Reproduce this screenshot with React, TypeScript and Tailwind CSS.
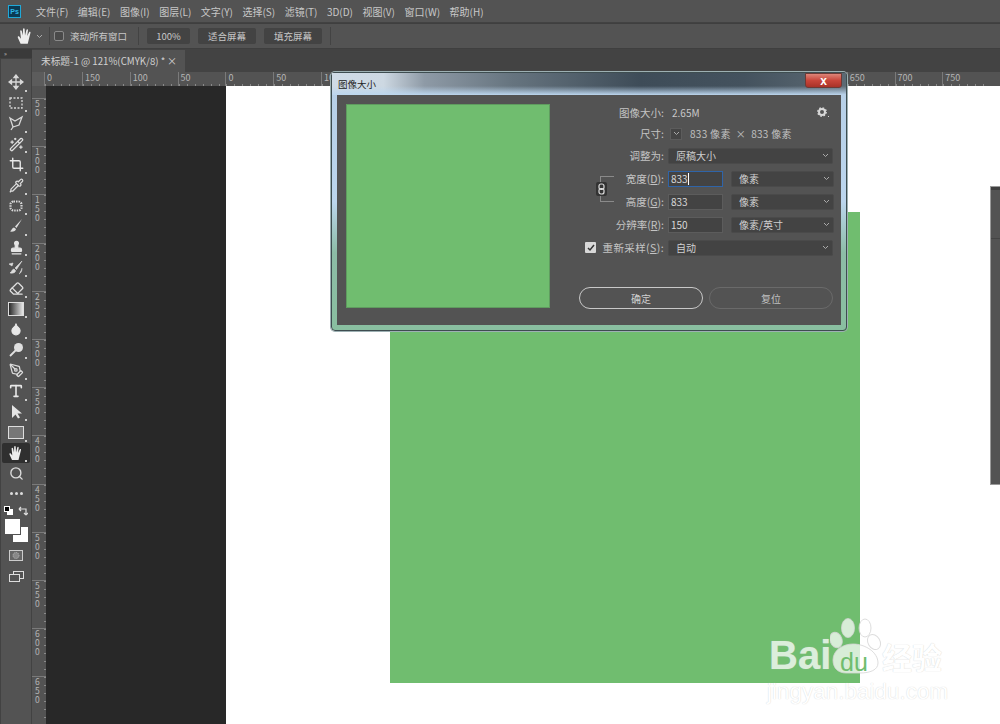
import React from 'react';
import { Crop, Droplet, Eraser, PenTool, Pipette, Search, Stamp, Type, WandSparkles } from 'lucide-react';

const menus = ['文件(F)', '编辑(E)', '图像(I)', '图层(L)', '文字(Y)', '选择(S)', '滤镜(T)', '3D(D)', '视图(V)', '窗口(W)', '帮助(H)'];
// labels between 150 and 600 sit behind the dialog
const topRuler = ['150', '100', '50', '0', '50', '100', '', '', '', '', '', '', '', '', '', '', '650', '700', '750'];
const sideRuler = ['50', '100', '150', '200', '250', '300', '350', '400', '450', '500', '550', '600', '650'];

function Svg({ children }: { children: React.ReactNode }) {
  return (
    <svg width="16" height="16" viewBox="0 0 16 16" fill="none" stroke="#d8d8d8" strokeWidth="1.3">
      {children}
    </svg>
  );
}

function HandIcon() {
  return (
    <svg width="16" height="16" viewBox="0 0 16 16" fill="#eee">
      <path d="M4 15 1.5 9.5c-.4-1 .8-1.6 1.4-.8L4.300 10.500 3.600 3.500c0-1 1.300-1 1.500 0L6 7.500 6.200 1.800c0-1 1.500-1 1.500 0L8 7.500 9.300 2.500c.2-1 1.500-.8 1.400.2L10 8l1.700-3.500c.4-.9 1.600-.4 1.300.5L11.500 11 10.500 15z" />
    </svg>
  );
}

const tools: React.ReactNode[] = [
  <Svg><path d="M8 1v14M1 8h14M8 1 6 3.500h4zM8 15l-2-2.500h4zM1 8l2.500-2v4zM15 8l-2.500-2v4z" fill="#d8d8d8" /></Svg>,
  <Svg><rect x="2" y="3" width="12" height="10" strokeDasharray="2 1.500" /></Svg>,
  <Svg><path d="M2 3l5 3 7-4-3 8-6 2zM5 12l-2 3" /></Svg>,
  <WandSparkles size={15} color="#e0e0e0" />,
  <Crop size={15} color="#e8e8e8" strokeWidth={2.2} />,
  <Pipette size={15} color="#dcdcdc" />,
  <Svg><rect x="2.500" y="3.500" width="11" height="9" rx="3" strokeWidth="2.200" strokeDasharray="1.500 1" /></Svg>,
  <svg width="16" height="16" viewBox="0 0 16 16" fill="#ddd"><path d="M14 1 7 8.500l1.500 1.500zM6 9.500c-2 .3-2 2.500-4 4 3 .5 6-.5 6-2.500z" /></svg>,
  <Stamp size={15} color="#e4e4e4" fill="#e4e4e4" />,
  <svg width="16" height="16" viewBox="0 0 16 16" fill="#ddd"><path d="M14 1 7 8l1.500 1.500zM6 9c-2 .3-2 2.500-4 4 3 .5 6-.5 5.500-2.500zM1 4l3 2 1-3zM14 8c0 3-1 5-3 6" stroke="#ddd" strokeWidth=".6" /></svg>,
  <Eraser size={15} color="#e0e0e0" />,
  <svg width="16" height="14" viewBox="0 0 16 14"><defs><linearGradient id="gr"><stop offset="0" stopColor="#222" /><stop offset="1" stopColor="#eee" /></linearGradient></defs><rect x=".5" y=".5" width="15" height="13" fill="url(#gr)" stroke="#ddd" /></svg>,
  <Droplet size={14} color="#e8e8e8" fill="#e8e8e8" />,
  <svg width="16" height="16" viewBox="0 0 16 16" fill="#e0e0e0"><circle cx="10.500" cy="5.500" r="4.500" /><path d="M8 8 2 14" stroke="#e0e0e0" strokeWidth="1.800" /></svg>,
  <PenTool size={15} color="#dcdcdc" />,
  <Type size={16} color="#e8e8e8" strokeWidth={2.4} />,
  <svg width="16" height="16" viewBox="0 0 16 16" fill="#e4e4e4"><path d="M4 1v13l3.500-3.500 2.500 4 2-1-2.500-4H14z" /></svg>,
  <svg width="16" height="13" viewBox="0 0 16 13"><rect x=".5" y=".5" width="15" height="12" fill="#777" stroke="#ddd" /></svg>,
  <HandIcon />,
  <Search size={15} color="#dcdcdc" strokeWidth={2.2} />,
];

function ToolBar() {
  return (
    <div className="w-[32px] shrink-0 flex flex-col bg-[#424242]">
      <div className="h-[9px] bg-[#3a3a3a] pl-[4px] text-[6px] leading-[9px] text-[#bbb]">»</div>
      <div className="flex-1 w-[30px] ml-px mt-px bg-[#535353] flex flex-col items-center pt-[13px]">
        {tools.map((icon, i) => (
          <div key={i} className={`relative w-[28px] h-[20.6px] shrink-0 flex items-center justify-center rounded-[2px] ${i === 18 ? 'bg-[#2f2f2f]' : ''}`}>
            {icon}
            {i !== 19 && <span className="absolute right-[3px] bottom-[1px] w-[2px] h-[2px] bg-[#ccc]" />}
          </div>
        ))}
        <div className="flex gap-[2px] h-[20px] items-center justify-center shrink-0">
          {[0, 1, 2].map((i) => (
            <span key={i} className="w-[3px] h-[3px] rounded-full bg-[#ddd]" />
          ))}
        </div>
        <div className="flex justify-between w-[24px] h-[14px] items-center shrink-0">
          <span className="relative w-[9px] h-[9px]">
            <span className="absolute right-0 bottom-0 w-[6px] h-[6px] bg-white" />
            <span className="absolute left-0 top-0 w-[6px] h-[6px] bg-black border border-white" />
          </span>
          <svg width="10" height="10" viewBox="0 0 10 10" fill="none" stroke="#ddd" strokeWidth="1.200">
            <path d="M1 3h7v6M1 3l2-2M1 3l2 2M8 9l-2-2M8 9l2-2" />
          </svg>
        </div>
        <div className="relative w-[24px] h-[24px] shrink-0">
          <span className="absolute right-0 bottom-0 w-[15px] h-[15px] bg-white" />
          <span className="absolute left-0 top-0 w-[15px] h-[15px] bg-white border border-[#535353] box-content" />
        </div>
        <div className="h-[26px] flex items-center shrink-0 mt-px">
          <svg width="14" height="11" viewBox="0 0 14 11">
            <rect x=".5" y=".5" width="13" height="10" fill="#666" stroke="#ccc" />
            <circle cx="7" cy="5.500" r="3" fill="#888" stroke="#bbb" strokeDasharray="1 1" />
          </svg>
        </div>
        <div className="h-[16px] flex items-center shrink-0">
          <svg width="15" height="11" viewBox="0 0 15 11" fill="#535353" stroke="#ddd">
            <rect x="4.500" y=".5" width="10" height="7" />
            <rect x=".5" y="3.500" width="10" height="7" />
          </svg>
        </div>
      </div>
    </div>
  );
}

function RulerCell({ label, width }: { label: string; width: string }) {
  return (
    <div className={`${width} shrink-0 relative border-l border-[#7a7a7a] pl-[2px]`}>
      {label}
      <span className="absolute left-0 right-0 bottom-0 h-[2px] bg-[repeating-linear-gradient(90deg,#8a8a8a_0,#8a8a8a_1px,transparent_1px,transparent_8px)]" />
    </div>
  );
}

function TopRuler() {
  return (
    <div className="h-[14px] bg-[#535353] flex shrink-0 overflow-hidden text-[9px] leading-[12px] text-[#b5b5b5]">
      <div className="w-[12px] shrink-0 bg-[#5c5c5c]" />
      <RulerCell label="0" width="w-[38px]" />
      {topRuler.map((label, i) => (
        <RulerCell key={i} label={label} width="w-[47.8px]" />
      ))}
    </div>
  );
}

function SideRuler() {
  return (
    <div className="w-[14px] shrink-0 bg-[#535353] overflow-hidden">
      <div className="h-[12px]" />
      {sideRuler.map((label, i) => (
        <div key={i} className="relative h-[48.2px] border-t border-[#7a7a7a] pl-[3px] text-[8.500px] leading-[9px] text-[#b5b5b5]">
          {label.split('').map((d, k) => (
            <div key={k}>{d}</div>
          ))}
          <span className="absolute top-0 bottom-0 right-0 w-[2px] bg-[repeating-linear-gradient(180deg,#8a8a8a_0,#8a8a8a_1px,transparent_1px,transparent_8px)]" />
        </div>
      ))}
    </div>
  );
}

function Chevron() {
  return (
    <svg width="7" height="5" viewBox="0 0 7 5" fill="none" stroke="#aaa">
      <path d="M1 1l2.500 2.500L6 1" />
    </svg>
  );
}

function Select({ value, className }: { value: string; className: string }) {
  return (
    <div className={`${className} h-[16px] rounded-[2px] bg-[#434343] border border-[#4a4a4a] flex items-center justify-between pl-[7px] pr-[3px] text-[10px] text-[#d0d0d0]`}>
      <span>{value}</span>
      <Chevron />
    </div>
  );
}

function Input({ value, focused }: { value: string; focused?: boolean }) {
  return (
    <div className={`w-[55px] h-[16px] bg-[#434343] border flex items-center pl-[2px] text-[10px] text-[#d8d8d8] ${focused ? 'border-[#2f64a8]' : 'border-[#5c5c5c]'}`}>
      {value}
      {focused && <span className="w-px h-[12px] bg-white" />}
    </div>
  );
}

function Row({ label, children, gap = 'mb-[6px]' }: { label: React.ReactNode; children: React.ReactNode; gap?: string }) {
  return (
    <div className={`flex items-center h-[17px] ${gap}`}>
      <div className="w-[108px] text-right pr-[4px] text-[#c4c4c4] whitespace-nowrap">{label}</div>
      {children}
    </div>
  );
}

function Key({ k }: { k: string }) {
  return <span className="underline">{k}</span>;
}

function Dialog() {
  return (
    <div className="absolute left-[331px] top-[72px] w-[516px] h-[259px] rounded-[4px] border border-[#3e4d50] px-[5px] pb-[5px] flex flex-col shadow-[0_0_0_1px_#9db0b3] bg-[linear-gradient(180deg,#b6cfe6_0,#bcd6ee_50%,#8cbca6_70%,#89bfa0_100%)]">
      <div className="h-[22px] -mx-[5px] px-[6px] shrink-0 relative flex items-center text-[9.500px] text-[#222] bg-[linear-gradient(90deg,#cfdbe6_0,#cdd8e2_10%,#8e9aa6_18%,#66747f_35%,#3e4c58_60%,#44525e_80%,#5c6a74_100%)]">
        <span className="relative z-10">图像大小</span>
        <span className="absolute left-0 right-0 bottom-0 h-[9px] bg-[linear-gradient(180deg,transparent,#bcd6ee)]" />
        <span className="absolute right-[4px] top-0 w-[37px] h-[15px] rounded-b-[3px] bg-[linear-gradient(180deg,#dd8578_0,#c8453a_50%,#a93228_100%)] border border-[#6d3a36] flex items-center justify-center text-[12px] leading-none font-bold text-white font-['Liberation_Sans',sans-serif]">
          x
        </span>
      </div>
      <div className="flex-1 bg-[#535353] flex pl-[9px] pt-[9px] text-[10.500px]">
        <div className="w-[204px] h-[204px] shrink-0 bg-[#70bd6f] border border-[#5f9c5f]" />
        <div className="ml-[10px] w-[274px] relative">
          <Row label="图像大小:" gap="mb-[4px]">
            <span className="text-[#c8c8c8] text-[10px] pl-[4px]">2.65M</span>
          </Row>
          <Row label="尺寸:" gap="mb-[5px]">
            <div className="flex items-center gap-[8px] text-[#c0c0c0] text-[10px] tracking-[0.3px]">
              <span className="w-[12px] h-[12px] ml-[2px] bg-[#454545] border border-[#5c5c5c] flex items-center justify-center">
                <Chevron />
              </span>
              <span className="whitespace-nowrap">833 像素 &nbsp;× &nbsp;833 像素</span>
            </div>
          </Row>
          <Row label="调整为:">
            <Select value="原稿大小" className="w-[165px]" />
          </Row>
          <Row label={<>宽度(<Key k="D" />):</>}>
            <Input value="833" focused />
            <Select value="像素" className="w-[103px] ml-[8px]" />
          </Row>
          <Row label={<>高度(<Key k="G" />):</>}>
            <Input value="833" />
            <Select value="像素" className="w-[103px] ml-[8px]" />
          </Row>
          <Row label={<>分辨率(<Key k="R" />):</>}>
            <Input value="150" />
            <Select value="像素/英寸" className="w-[103px] ml-[8px]" />
          </Row>
          <Row
            label={
              <span className="flex items-center justify-end gap-[6px]">
                <span className="w-[11px] h-[11px] rounded-[1px] bg-[#d8d8d8] flex items-center justify-center">
                  <svg width="8" height="8" viewBox="0 0 8 8" fill="none" stroke="#333" strokeWidth="1.500">
                    <path d="M1 4l2 2 4-5" />
                  </svg>
                </span>
                <span className="tracking-[0.4px]">重新采样(<Key k="S" />):</span>
              </span>
            }
          >
            <Select value="自动" className="w-[165px]" />
          </Row>
          <div className="flex gap-[6px] mt-[31px] ml-[19px] text-[10px]">
            <div className="w-[124px] h-[22px] rounded-full border border-[#c8c8c8] flex items-center justify-center text-[#d0d0d0]">确定</div>
            <div className="w-[124px] h-[22px] rounded-full border border-[#6a6a6a] flex items-center justify-center text-[#c0c0c0]">复位</div>
          </div>
          {/* gear */}
          <span className="absolute left-[257px] top-[3px] flex items-end gap-px">
            <svg width="10" height="10" viewBox="0 0 10 10" fill="none">
              <circle cx="5" cy="5" r="3" stroke="#d8d8d8" strokeWidth="2" />
              <circle cx="5" cy="5" r="4.200" stroke="#d8d8d8" strokeWidth="1.400" strokeDasharray="1.600 1.700" />
            </svg>
            <span className="w-px h-px bg-[#d0d0d0]" />
          </span>
          {/* link bracket */}
          <span className="absolute left-[40px] top-[72px] w-[14px] h-[26px] border-l border-t border-b border-[#8a8a8a]" />
          <span className="absolute left-[36px] top-[78px] w-[11px] h-[14px] rounded-[2px] bg-[#333] flex items-center justify-center">
            <svg width="7" height="12" viewBox="0 0 7 12" fill="none" stroke="#ddd" strokeWidth="1.200">
              <rect x="1" y="1" width="5" height="5.500" rx="2" />
              <rect x="1" y="5.500" width="5" height="5.500" rx="2" />
            </svg>
          </span>
        </div>
      </div>
    </div>
  );
}

function Watermark() {
  return (
    <div className="absolute left-[766px] top-[616px] w-[190px] h-[90px] font-['Liberation_Sans',sans-serif] text-white [text-shadow:0_0_1px_#c4c4c4]">
      <svg className="absolute left-[64px] top-[2px]" width="56" height="60" viewBox="0 0 56 60" fill="#fff" fillOpacity=".72" stroke="#d4d4d4" strokeOpacity=".8">
        <ellipse cx="18" cy="10" rx="6.500" ry="9.500" />
        <ellipse cx="35" cy="10" rx="6" ry="9" />
        <ellipse cx="6" cy="22" rx="6" ry="8" transform="rotate(-20 6 22)" />
        <ellipse cx="44" cy="24" rx="6" ry="8" transform="rotate(-30 44 24)" />
        <path d="M3 42c0-10 10-16 20-16 12 0 25 8 25 19 0 7-8 10-18 10H16C8 55 3 50 3 42z" />
      </svg>
      <span className="absolute left-[3px] top-[15px] text-[40px] leading-[48px] font-bold opacity-75">Bai</span>
      <span className="absolute left-[74px] top-[32px] text-[25px] leading-[28px] text-[#70bd6f] [text-shadow:none]">du</span>
      <span className="absolute left-[116px] top-[22px] text-[30px] leading-[36px] font-bold font-['Noto_Sans_CJK_SC',sans-serif] opacity-90 whitespace-nowrap">经验</span>
      <span className="absolute left-[1px] top-[63px] text-[22.500px] leading-[26px] opacity-80 whitespace-nowrap">jingyan.baidu.com</span>
    </div>
  );
}

export default function App() {
  return (
    <div className="relative w-[1000px] h-[724px] overflow-hidden flex flex-col bg-[#424242] font-['Noto_Sans_CJK_SC',sans-serif] text-[#c8c8c8]">
      {/* Menu bar */}
      <div className="h-[22px] shrink-0 bg-[#535353] flex items-center pl-[8px] text-[10px]">
        <div className="w-[13px] h-[13px] bg-[#0b3a54] border border-[#1fa8d8] text-[#2fb8e8] text-[7px] leading-[11px] text-center font-bold font-['Liberation_Sans',sans-serif]">Ps</div>
        <div className="flex gap-[9.500px] ml-[15px]">
          {menus.map((m) => (
            <span key={m} className="whitespace-nowrap">{m}</span>
          ))}
        </div>
      </div>

      {/* Options bar */}
      <div className="h-[26px] shrink-0 mt-px bg-[#535353] flex items-center text-[9.500px] border-y border-[#3f3f3f]">
        <div className="ml-[17px] scale-110"><HandIcon /></div>
        <div className="ml-[3px]"><Chevron /></div>
        <div className="w-px h-[18px] bg-[#434343] ml-[6px]" />
        <span className="w-[10px] h-[10px] ml-[4px] rounded-[2px] border border-[#8a8a8a] bg-[#4a4a4a]" />
        <span className="ml-[6px] whitespace-nowrap">滚动所有窗口</span>
        <div className="w-px h-[18px] bg-[#434343] ml-[11px]" />
        <div className="flex gap-[8px] ml-[8px]">
          <div className="w-[43px] h-[16px] bg-[#434343] rounded-[2px] flex items-center justify-center">100%</div>
          <div className="w-[58px] h-[16px] bg-[#434343] rounded-[2px] flex items-center justify-center">适合屏幕</div>
          <div className="w-[58px] h-[16px] bg-[#434343] rounded-[2px] flex items-center justify-center">填充屏幕</div>
        </div>
        <div className="w-px h-[18px] bg-[#434343] ml-[8px]" />
      </div>

      {/* Work area */}
      <div className="flex-1 flex min-h-0">
        <ToolBar />
        <div className="flex-1 flex flex-col min-w-0">
          <div className="h-[23px] shrink-0 bg-[#434343] flex items-end">
            <div className="w-[153px] h-[22px] bg-[#535353] flex items-center justify-between pl-[9px] pr-[8px] text-[9.700px] text-[#d0d0d0]">
              <span className="whitespace-nowrap">未标题-1 @ 121%(CMYK/8) *</span>
              <span className="text-[10px] leading-none">×</span>
            </div>
          </div>
          <TopRuler />
          <div className="flex-1 flex min-h-0">
            <SideRuler />
            <div className="w-[180px] shrink-0 bg-[#282828]" />
            <div className="flex-1 bg-white" />
          </div>
        </div>
      </div>

      {/* Document */}
      <div className="absolute left-[390px] top-[212px] w-[470px] h-[471px] bg-[#70bd6f]" />
      {/* Panel peeking from the right */}
      <div className="absolute left-[990px] top-[186px] w-[10px] h-[299px] bg-[#535353] border-l border-y border-[#9a9a9a]">
        <div className="h-[3px] bg-[#3f3f3f]" />
        <div className="mt-[48px] h-px bg-[#444]" />
      </div>
      <Dialog />
      <Watermark />
    </div>
  );
}
